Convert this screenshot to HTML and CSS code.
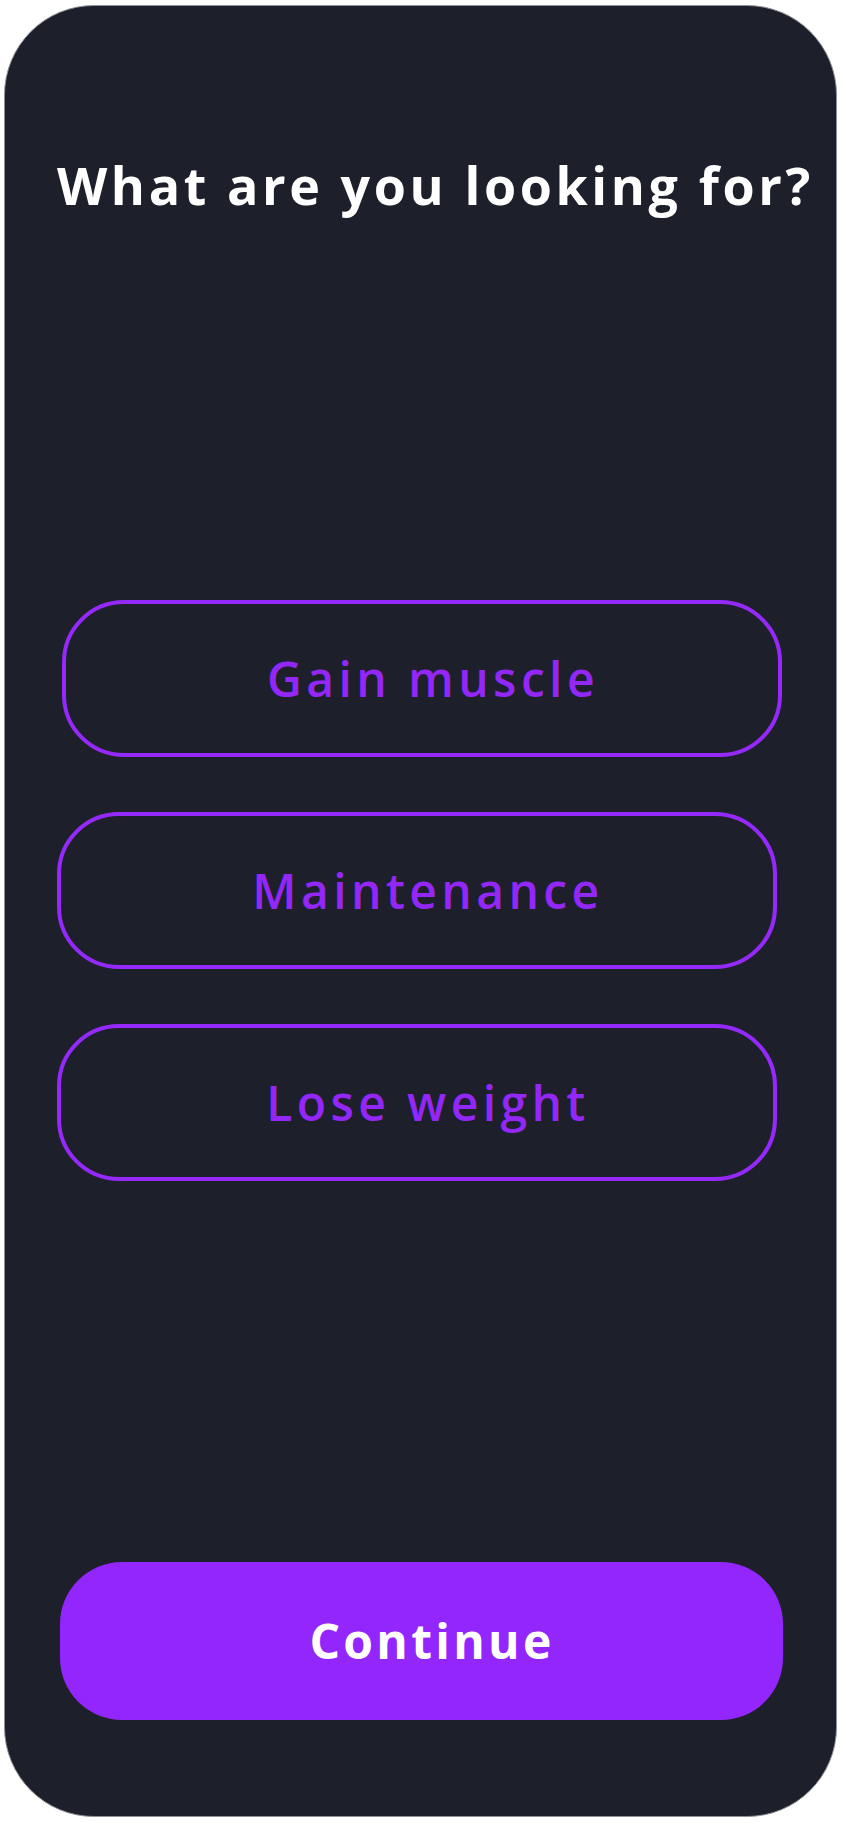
FILE: index.html
```html
<!DOCTYPE html>
<html lang="en">
<head>
<meta charset="utf-8">
<title>What are you looking for?</title>
<link rel="stylesheet" href="styles.css">
</head>
<body>
<main class="card">
  <h1 class="title">What are you looking for?</h1>
  <div class="options">
    <button class="option option-first" type="button">Gain muscle</button>
    <button class="option" type="button">Maintenance</button>
    <button class="option" type="button">Lose weight</button>
  </div>
  <div class="spacer"></div>
  <button class="continue" type="button">Continue</button>
</main>
</body>
</html>
```
FILE: styles.css
```css
html, body {
  margin: 0;
  padding: 0;
  background: #ffffff;
}

body {
  font-family: "Open Sans", "DejaVu Sans", sans-serif;
}

.card {
  box-sizing: border-box;
  width: 833px;
  height: 1812px;
  margin: 5px 0 0 4px;
  background: #1d202a;
  border: 1px solid #8d9096;
  border-radius: 90px;
  display: flex;
  flex-direction: column;
  padding: 0 0 96px 52px;
}

.title {
  margin: 0;
  padding-top: 148px;
  font-size: 52px;
  line-height: 1.2;
  font-weight: 700;
  letter-spacing: 3.6px;
  color: #ffffff;
  white-space: nowrap;
}

.options {
  display: flex;
  flex-direction: column;
  gap: 55px;
  margin-top: 384px;
}

.option {
  box-sizing: border-box;
  width: 720px;
  height: 157px;
  border: 4px solid #9429fa;
  border-radius: 62px;
  background: transparent;
  color: #9327f8;
  font-family: "Open Sans", "DejaVu Sans", sans-serif;
  font-size: 48px;
  font-weight: 600;
  letter-spacing: 4.4px;
  line-height: 1;
  padding: 0 0 0 22px;
  display: flex;
  align-items: center;
  justify-content: center;
}

.option-first {
  margin-left: 5px;
}

.spacer {
  flex: 1;
}

.continue {
  box-sizing: border-box;
  width: 723px;
  height: 158px;
  margin-left: 3px;
  border: none;
  border-radius: 62px;
  background: #9326fc;
  color: #ffffff;
  font-family: "Open Sans", "DejaVu Sans", sans-serif;
  font-size: 48px;
  font-weight: 700;
  letter-spacing: 3.3px;
  line-height: 1;
  padding: 0 0 0 21px;
  display: flex;
  align-items: center;
  justify-content: center;
}
```
